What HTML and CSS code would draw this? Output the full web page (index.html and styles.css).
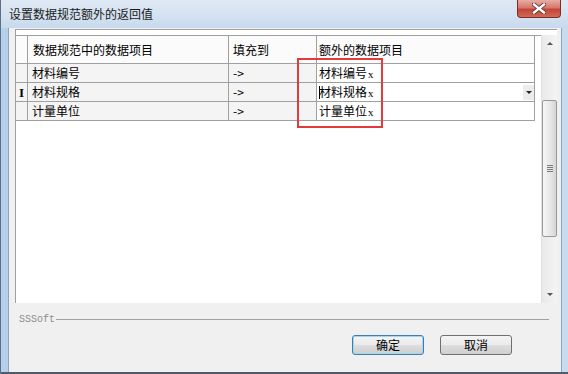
FILE: index.html
```html
<!DOCTYPE html>
<html lang="zh-CN">
<head>
  <meta charset="UTF-8">
  <title>设置数据规范额外的返回值</title>
  <link rel="stylesheet" href="styles.css">
</head>
<body>
  <div class="ventana">
    <div class="barra-titulo">
      <span class="titulo">设置数据规范额外的返回值</span>
      <span class="cerrar">
        <svg width="14" height="11" viewBox="0 0 14 11">
          <path d="M2 1.5 L12 9.5 M12 1.5 L2 9.5" stroke="#5a2a26" stroke-width="4" stroke-linecap="square"/>
          <path d="M2 1.5 L12 9.5 M12 1.5 L2 9.5" stroke="#ffffff" stroke-width="2.4" stroke-linecap="square"/>
        </svg>
      </span>
    </div>

    <div class="marco">
      <div class="cliente">

        <!-- rejilla de datos -->
        <div class="rejilla">
          <div class="tabla">
            <div class="fila cabecera">
              <div class="celda marca"></div>
              <div class="celda">数据规范中的数据项目</div>
              <div class="celda">填充到</div>
              <div class="celda extra">额外的数据项目</div>
            </div>
            <div class="fila">
              <div class="celda marca"></div>
              <div class="celda">材料编号</div>
              <div class="celda">-&gt;</div>
              <div class="celda extra">材料编号<span class="x">x</span></div>
            </div>
            <div class="fila">
              <div class="celda marca"><span class="cursor-i">I</span></div>
              <div class="celda">材料规格</div>
              <div class="celda">-&gt;</div>
              <div class="celda extra editando">
                <span class="caret"></span>材料规格<span class="x">x</span>
                <span class="desplegar"><span class="flecha-abajo"></span></span>
              </div>
            </div>
            <div class="fila">
              <div class="celda marca"></div>
              <div class="celda">计量单位</div>
              <div class="celda">-&gt;</div>
              <div class="celda extra">计量单位<span class="x">x</span></div>
            </div>
          </div>

          <div class="scroll">
            <div class="boton-scroll"><span class="flecha-arriba"></span></div>
            <div class="pista-arriba"></div>
            <div class="pulgar">
              <span class="agarre"></span>
            </div>
            <div class="pista-abajo"></div>
            <div class="boton-scroll abajo"><span class="flecha-abajo"></span></div>
          </div>

          <div class="recuadro-rojo"></div>
        </div>

        <div class="pie">
          <div class="leyenda">
            <span>SSSoft</span>
            <span class="linea"></span>
          </div>
          <div class="botones">
            <button type="button" class="boton foco">确定</button>
            <button type="button" class="boton">取消</button>
          </div>
        </div>

      </div>
    </div>
  </div>
</body>
</html>
```

FILE: styles.css
```css
body {
  margin: 0;
  font-family: "Noto Sans CJK SC", "Liberation Sans", sans-serif;
  font-size: 12px;
  color: #000;
  background: #ffffff;
}
.ventana {
  width: 568px;
  height: 374px;
  display: flex;
  flex-direction: column;
  background: #c3d6ec;
  overflow: hidden;
}
.barra-titulo {
  height: 28px;
  display: flex;
  align-items: flex-start;
  justify-content: space-between;
  background: linear-gradient(180deg, #dfe9f5 0%, #d3e1f0 60%, #c7d9ee 100%);
  border-left: 1px solid #5d6f82;
  box-sizing: border-box;
}
.titulo {
  margin-left: 8px;
  margin-top: 5px;
  line-height: 18px;
  color: #1b1b1b;
}
.cerrar {
  width: 44px;
  height: 18px;
  margin-right: 7px;
  box-sizing: border-box;
  border: 1px solid #7e2d26;
  border-top: none;
  border-radius: 0 0 4px 4px;
  background: linear-gradient(180deg, #e8aca3 0%, #d7786c 45%, #c2453a 55%, #cf6b55 100%);
  display: flex;
  align-items: center;
  justify-content: center;
}
.marco {
  flex: 1;
  display: flex;
  padding: 0 6px 2px 7px;
  border-left: 1px solid #5d6f82;
  border-bottom: 0;
  background: linear-gradient(90deg, #b6cfec, #c8dcf1);
  box-shadow: inset 0 -2px 0 #4f5d6b;
}
.cliente {
  flex: 1;
  background: #f0f0f0;
  display: flex;
  flex-direction: column;
  border-left: 1px solid #8fa3b8;
  border-right: 1px solid #8fa3b8;
  box-sizing: border-box;
}

/* rejilla */
.rejilla {
  position: relative;
  margin: 1px 0 0 6px;
  width: 542px;
  height: 274px;
  box-sizing: border-box;
  background: #fff;
  border-top: 1px solid #a0a0a0;
  border-left: 1px solid #a0a0a0;
  display: flex;
}
.tabla {
  flex: 1;
  padding-top: 5px;
}
.fila {
  display: grid;
  grid-template-columns: 12px 201px 88px 218px;
  height: 19px;
}
.fila.cabecera {
  height: 28px;
  border-top: 1px solid #a0a0a0;
}
.celda {
  box-sizing: border-box;
  border-right: 1px solid #a0a0a0;
  border-bottom: 1px solid #a0a0a0;
  padding-left: 4px;
  line-height: 18px;
  white-space: nowrap;
  background: #f4f4f4;
  display: flex;
  align-items: center;
}
.cabecera .celda {
  background: #fbfbfb;
  padding-left: 4px;
}
.cabecera .celda:nth-child(2) {
  padding-left: 5px;
}
.celda.marca {
  padding-left: 0;
  justify-content: center;
}
.celda.extra {
  background: #ffffff;
  padding-left: 2px;
}
.cabecera .celda.extra {
  background: #fbfbfb;
}
.x {
  font-family: "Liberation Serif", serif;
  font-size: 11px;
  margin-left: 1px;
  position: relative;
  top: 1px;
}
.cursor-i {
  font-family: "Liberation Serif", serif;
  font-weight: bold;
  font-size: 13px;
  line-height: 13px;
}
.caret {
  display: inline-block;
  width: 1px;
  height: 13px;
  background: #000;
  margin-right: -1px;
}
.editando {
  position: relative;
}
.desplegar {
  margin-left: auto;
  width: 11px;
  height: 15px;
  background: #ececec;
  display: flex;
  align-items: center;
  justify-content: center;
}
.flecha-abajo {
  width: 0;
  height: 0;
  border-left: 3px solid transparent;
  border-right: 3px solid transparent;
  border-top: 3px solid #222;
}
.flecha-arriba {
  width: 0;
  height: 0;
  border-left: 3px solid transparent;
  border-right: 3px solid transparent;
  border-bottom: 3px solid #555;
}

/* barra de desplazamiento */
.scroll {
  width: 16px;
  margin-top: 5px;
  box-sizing: border-box;
  border-left: 1px solid #e2e2e2;
  background: linear-gradient(90deg, #e9e9e9, #f4f4f4);
  display: flex;
  flex-direction: column;
}
.boton-scroll {
  height: 17px;
  display: flex;
  align-items: center;
  justify-content: center;
}
.boton-scroll .flecha-abajo {
  border-top-color: #555;
}
.pista-arriba {
  height: 48px;
}
.pista-abajo {
  flex: 1;
}
.pulgar {
  height: 137px;
  box-sizing: border-box;
  border: 1px solid #9a9a9a;
  border-radius: 2px;
  background: linear-gradient(90deg, #f6f6f6, #e6e6e6 60%, #d4d4d4);
  display: flex;
  align-items: center;
  justify-content: center;
}
.agarre {
  width: 6px;
  height: 7px;
  background: repeating-linear-gradient(180deg, #7a7a7a 0, #7a7a7a 1px, transparent 1px, transparent 2px);
}

/* recuadro de anotación */
.recuadro-rojo {
  position: absolute;
  left: 281px;
  top: 28px;
  width: 86px;
  height: 70px;
  box-sizing: border-box;
  border: 2px solid #e53a3c;
}

/* pie */
.pie {
  flex: 1;
  display: flex;
  flex-direction: column;
}
.leyenda {
  display: flex;
  align-items: center;
  margin: 10px 12px 0 10px;
  height: 12px;
  font-family: "Liberation Mono", monospace;
  font-size: 10px;
  color: #8c8c8c;
}
.linea {
  flex: 1;
  height: 0;
  border-top: 1px solid #a0a0a0;
  margin-left: 1px;
}
.botones {
  display: flex;
  justify-content: flex-end;
  gap: 16px;
  margin-top: 10px;
  padding-right: 49px;
}
.boton {
  width: 72px;
  height: 20px;
  padding: 0;
  font-family: "Noto Sans CJK SC", sans-serif;
  font-size: 12px;
  line-height: 16px;
  color: #000;
  border: 1px solid #707070;
  border-radius: 3px;
  background: linear-gradient(180deg, #f4f4f4 0%, #ebebeb 48%, #dddddd 52%, #cfcfcf 100%);
}
.boton.foco {
  border-color: #3c7fb1;
  box-shadow: inset 0 0 0 1px #a6d5f0;
}
```
